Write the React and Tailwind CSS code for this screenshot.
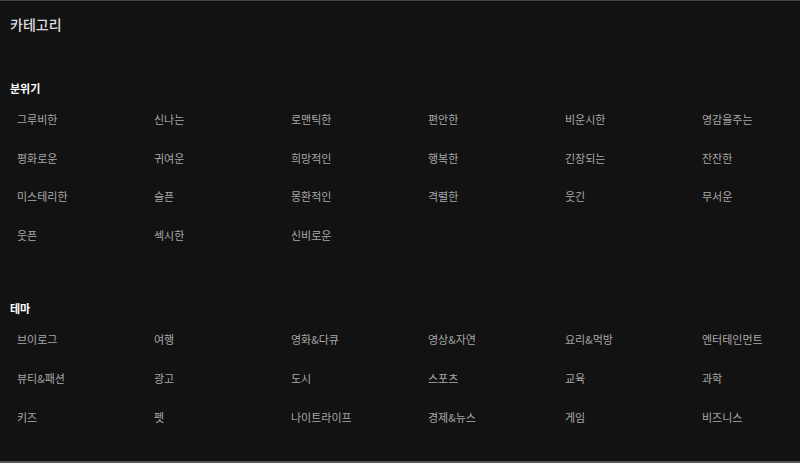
import React from "react";

const moods = [
  "그루비한", "신나는", "로맨틱한", "편안한", "비운시한", "영감을주는",
  "평화로운", "귀여운", "희망적인", "행복한", "긴장되는", "잔잔한",
  "미스테리한", "슬픈", "몽환적인", "격렬한", "웃긴", "무서운",
  "웃픈", "섹시한", "신비로운",
];

const themes = [
  "브이로그", "여행", "영화&다큐", "영상&자연", "요리&먹방", "엔터테인먼트",
  "뷰티&패션", "광고", "도시", "스포츠", "교육", "과학",
  "키즈", "펫", "나이트라이프", "경제&뉴스", "게임", "비즈니스",
];

function Section({ title, items, className }) {
  return (
    <section className={className}>
      <h3 className="px-[10px] text-[11px] leading-[16px] font-bold text-white">
        {title}
      </h3>
      <ul className="mt-[4px] grid grid-cols-[repeat(6,137px)] auto-rows-[38.6px] px-[17px]">
        {items.map((t) => (
          <li
            key={t}
            className="flex items-center text-[11px] text-[#a8a8a8] whitespace-nowrap cursor-pointer hover:text-white"
          >
            {t}
          </li>
        ))}
      </ul>
    </section>
  );
}

export default function App() {
  return (
    <div
      className="w-[800px] h-[463px] overflow-hidden bg-[#121212] border-t border-[#444] border-b-2 border-b-[#555]"
      style={{ fontFamily: '"Noto Sans CJK KR", "Noto Sans", sans-serif' }}
    >
      <h2 className="pt-[13px] px-[10px] text-[14px] leading-[20px] font-medium text-[#dcdcdc]">
        카테고리
      </h2>
      <Section title="분위기" items={moods} className="mt-[46px]" />
      <Section title="테마" items={themes} className="mt-[46px]" />
    </div>
  );
}
